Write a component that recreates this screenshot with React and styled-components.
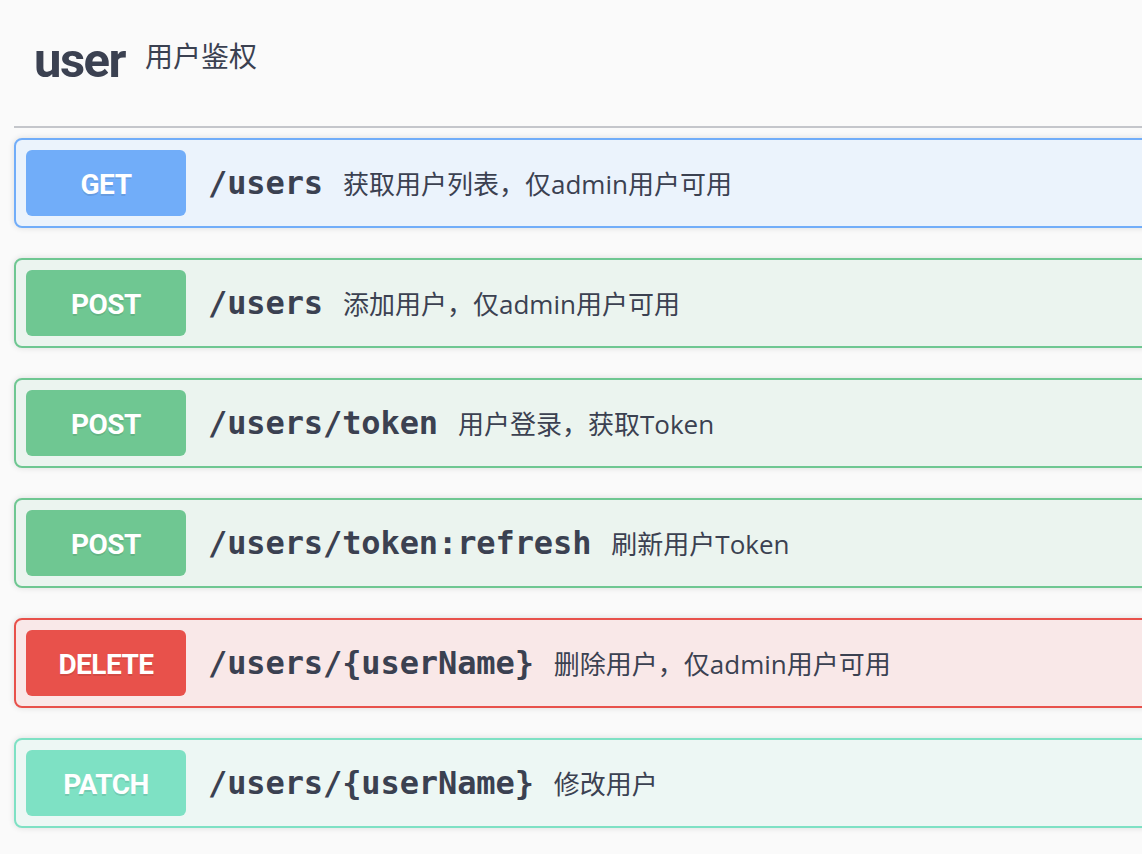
import React from "react";
import styled, { createGlobalStyle } from "styled-components";

const Global = createGlobalStyle`
  html, body { margin: 0; padding: 0; background: #fafafa; overflow: hidden; }
  body { font-family: "Open Sans", "Noto Sans CJK SC", sans-serif; color: #3b4151; }
`;

const Page = styled.div`
  width: 1260px;
  padding-left: 14px;
  box-sizing: border-box;
`;

const TagHeader = styled.h4`
  display: flex;
  align-items: center;
  margin: 0 0 10px;
  height: 128px;
  box-sizing: border-box;
  padding: 0 40px 6px 20px;
  border-bottom: 2px solid #c4c6cb;
`;

const TagName = styled.span`
  font-family: Roboto, "Liberation Sans", sans-serif;
  font-weight: 700;
  font-size: 49px;
  letter-spacing: -1.5px;
  color: #3b4151;
  line-height: 1;
`;

const TagDesc = styled.small`
  font-family: "Open Sans", "Noto Sans CJK SC", sans-serif;
  font-weight: 400;
  font-size: 28px;
  padding: 0 20px;
  margin-top: -10px;
  color: #3b4151;
`;

const methods = {
  get: { main: "#71adf9", bg: "#ebf3fc" },
  post: { main: "#6fc792", bg: "#ebf4ef" },
  delete: { main: "#e8514b", bg: "#f9e8e8" },
  patch: { main: "#7ee1c4", bg: "#edf7f4" },
};

const Block = styled.div`
  display: flex;
  align-items: center;
  margin-bottom: 30px;
  padding: 10px;
  border: 2px solid ${(p) => methods[p.$m].main};
  background: ${(p) => methods[p.$m].bg};
  border-radius: 8px;
  box-shadow: 0 0 6px rgba(0, 0, 0, 0.12);
`;

const Method = styled.span`
  flex: none;
  width: 160px;
  box-sizing: border-box;
  padding: 14px 0 10px;
  text-align: center;
  border-radius: 6px;
  background: ${(p) => methods[p.$m].main};
  color: #fff;
  font-family: Roboto, "Liberation Sans", sans-serif;
  font-weight: 700;
  font-size: 28px;
  letter-spacing: -0.5px;
  line-height: 42px;
  text-shadow: 0 2px 0 rgba(0, 0, 0, 0.1);
`;

const Path = styled.span`
  padding: 0 20px 0 22px;
  font-family: "DejaVu Sans Mono", "Liberation Mono", monospace;
  font-weight: 700;
  font-size: 32px;
  letter-spacing: -0.1px;
  color: #3b4151;
`;

const Desc = styled.span`
  font-family: "Open Sans", "Noto Sans CJK SC", sans-serif;
  font-size: 26px;
  color: #3b4151;
`;

const ops = [
  { m: "get", label: "GET", path: "/users", desc: "获取用户列表，仅admin用户可用" },
  { m: "post", label: "POST", path: "/users", desc: "添加用户，仅admin用户可用" },
  { m: "post", label: "POST", path: "/users/token", desc: "用户登录，获取Token" },
  { m: "post", label: "POST", path: "/users/token:refresh", desc: "刷新用户Token" },
  { m: "delete", label: "DELETE", path: "/users/{userName}", desc: "删除用户，仅admin用户可用" },
  { m: "patch", label: "PATCH", path: "/users/{userName}", desc: "修改用户" },
];

export default function App() {
  return (
    <>
      <Global />
      <Page>
        <TagHeader>
          <TagName>user</TagName>
          <TagDesc>用户鉴权</TagDesc>
        </TagHeader>
        {ops.map((o, i) => (
          <Block key={i} $m={o.m}>
            <Method $m={o.m}>{o.label}</Method>
            <Path>{o.path}</Path>
            <Desc>{o.desc}</Desc>
          </Block>
        ))}
      </Page>
    </>
  );
}
